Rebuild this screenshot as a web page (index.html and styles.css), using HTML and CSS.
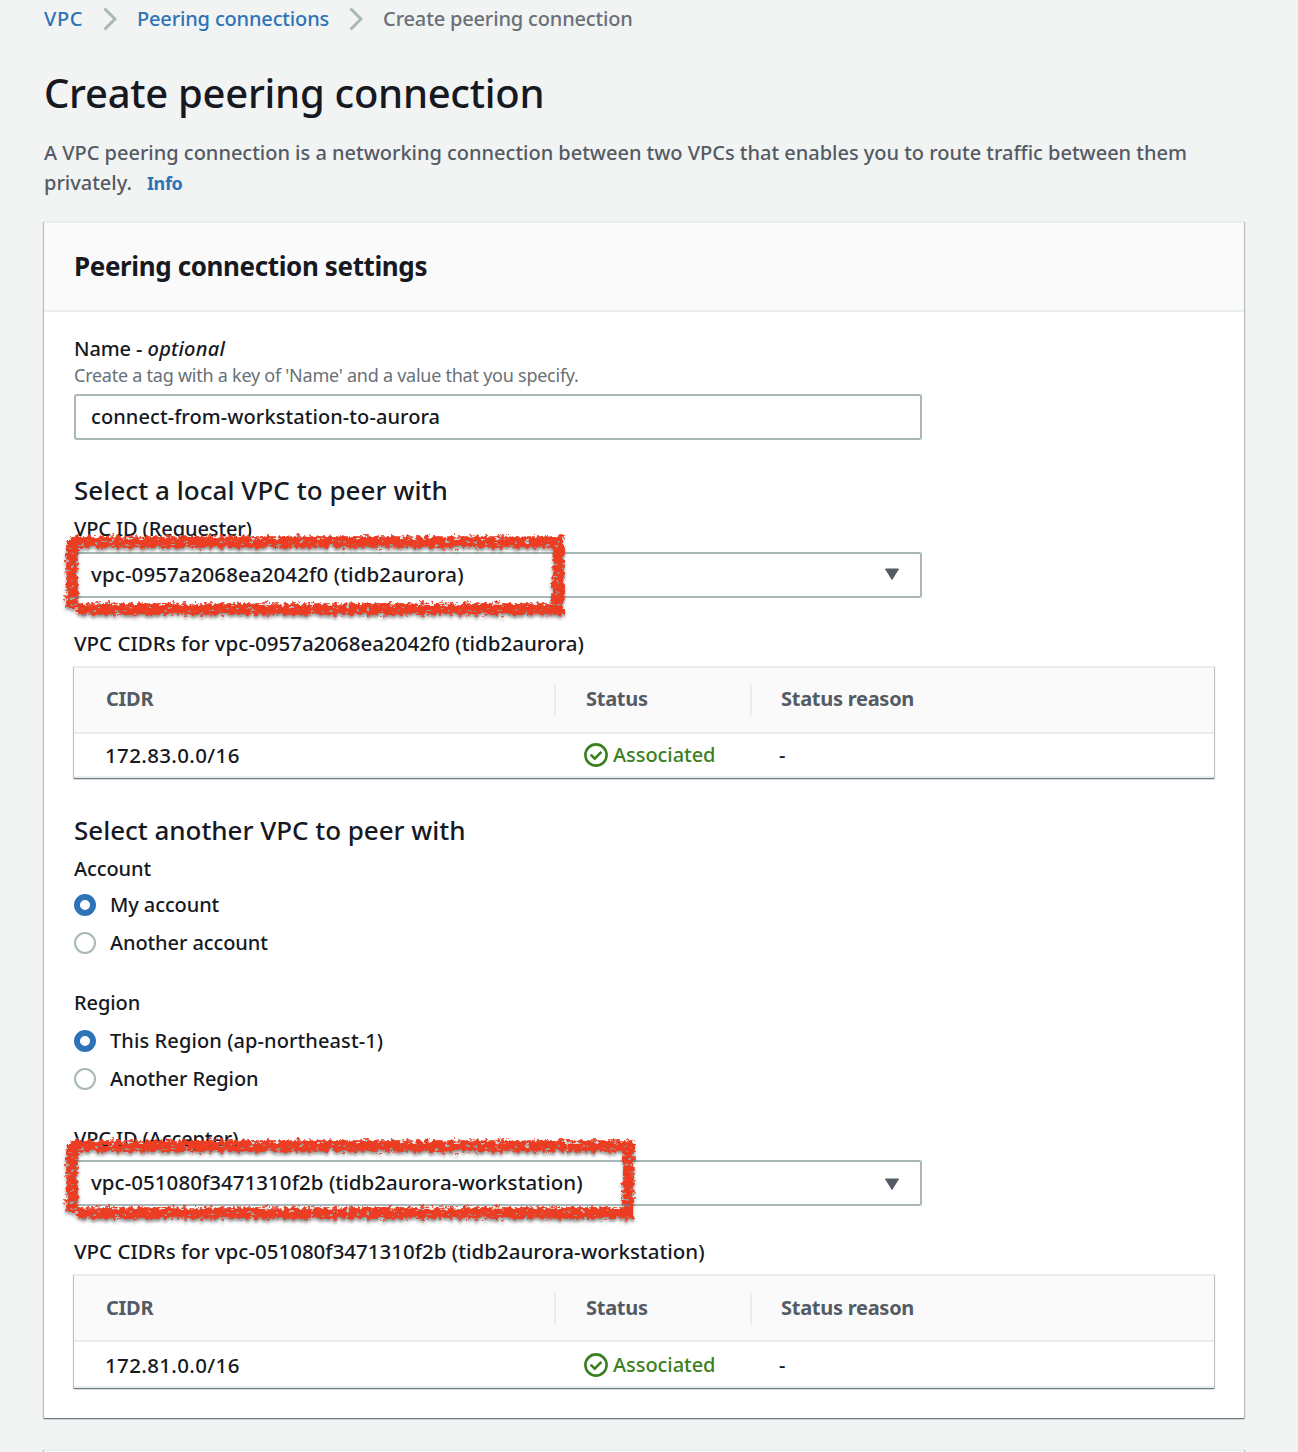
FILE: index.html
```html
<!DOCTYPE html>
<html lang="en">
<head>
<meta charset="utf-8">
<title>Create peering connection</title>
<link rel="stylesheet" href="styles.css">
</head>
<body>
<svg class="defs" width="0" height="0" aria-hidden="true">
  <filter id="brush" filterUnits="userSpaceOnUse" x="0" y="0" width="670" height="110" color-interpolation-filters="sRGB">
    <feTurbulence type="fractalNoise" baseFrequency="0.24" numOctaves="3" seed="4" result="noise"/>
    <feDisplacementMap in="SourceGraphic" in2="noise" scale="9" xChannelSelector="R" yChannelSelector="G" result="rough"/>
    <feTurbulence type="fractalNoise" baseFrequency="0.2 0.32" numOctaves="2" seed="11"/>
    <feColorMatrix values="0 0 0 0 0  0 0 0 0 0  0 0 0 0 0  -14 0 0 0 10" result="specks"/>
    <feComposite in="rough" in2="specks" operator="in" result="ink"/>
    <feDropShadow in="ink" dx="0" dy="2.5" stdDeviation="1.8" flood-color="#000" flood-opacity=".45"/>
  </filter>
</svg>
<nav class="breadcrumbs">
  <a>VPC</a>
  <svg class="chevron" viewBox="0 0 14 24"><path d="M1.5 1.5 12 12 1.5 22.5"/></svg>
  <a>Peering connections</a>
  <svg class="chevron" viewBox="0 0 14 24"><path d="M1.5 1.5 12 12 1.5 22.5"/></svg>
  <span>Create peering connection</span>
</nav>
<h1>Create peering connection</h1>
<p class="description">A VPC peering connection is a networking connection between two VPCs that enables you to route traffic between them<br>privately. <a class="info">Info</a></p>

<main class="card">
  <header class="card-header"><h2>Peering connection settings</h2></header>
  <div class="card-body">
    <div class="label">Name - <em>optional</em></div>
    <div class="hint">Create a tag with a key of 'Name' and a value that you specify.</div>
    <div class="field name-field">connect-from-workstation-to-aurora</div>

    <h3>Select a local VPC to peer with</h3>
    <div class="label requester-label">VPC ID (Requester)</div>
    <div class="field select vpc">vpc-0957a2068ea2042f0 (tidb2aurora)
      <svg class="caret" viewBox="0 0 16 13"><path d="M1.5 1h13L8 11.5z"/></svg>
      <svg class="marker" width="670" height="110"><g filter="url(#brush)"><path d="M20 26H514M22 26V92M508 24V98M27 93H514"/></g></svg>
    </div>
    <div class="caption">VPC CIDRs for vpc-0957a2068ea2042f0 (tidb2aurora)</div>
    <div class="table">
      <div class="row head"><div class="cell">CIDR</div><div class="cell">Status</div><div class="cell">Status reason</div></div>
      <div class="row">
        <div class="cell num">172.83.0.0/16</div>
        <div class="cell ok"><svg viewBox="0 0 24 24"><circle cx="12" cy="12" r="10.6"/><path d="m6.7 11.7 4 4 6.7-6.8"/></svg>Associated</div>
        <div class="cell">-</div>
      </div>
    </div>

    <h3 class="another">Select another VPC to peer with</h3>
    <div class="label">Account</div>
    <div class="radio first"><i class="dot on"></i>My account</div>
    <div class="radio"><i class="dot"></i>Another account</div>
    <div class="label region-label">Region</div>
    <div class="radio"><i class="dot on"></i>This Region (ap-northeast-1)</div>
    <div class="radio"><i class="dot"></i>Another Region</div>

    <div class="label accepter-label">VPC ID (Accepter)</div>
    <div class="field select vpc accepter">vpc-051080f3471310f2b (tidb2aurora-workstation)
      <svg class="caret" viewBox="0 0 16 13"><path d="M1.5 1h13L8 11.5z"/></svg>
      <svg class="marker" width="670" height="110"><g filter="url(#brush)"><path d="M20 26H584M22 26V92M578 24V98M27 93H584"/></g></svg>
    </div>
    <div class="caption">VPC CIDRs for vpc-051080f3471310f2b (tidb2aurora-workstation)</div>
    <div class="table accepter-table">
      <div class="row head"><div class="cell">CIDR</div><div class="cell">Status</div><div class="cell">Status reason</div></div>
      <div class="row">
        <div class="cell num">172.81.0.0/16</div>
        <div class="cell ok"><svg viewBox="0 0 24 24"><circle cx="12" cy="12" r="10.6"/><path d="m6.7 11.7 4 4 6.7-6.8"/></svg>Associated</div>
        <div class="cell">-</div>
      </div>
    </div>
  </div>
</main>
<section class="card next-card"></section>
</body>
</html>
```
FILE: styles.css
```css
* { box-sizing: border-box; }
html { height: 1452px; overflow: hidden; }
body {
  margin: 0;
  padding: 0 53px 0 44px;
  height: 1452px;
  overflow: hidden;
  background: #f2f3f3;
  color: #16191f;
  font: 500 20px/30px "Noto Sans", sans-serif;
}
h1, h2, h3, p { margin: 0; }
.defs { position: absolute; }

.breadcrumbs { display: flex; align-items: center; height: 38px; color: #687078; letter-spacing: -.16px; }
.breadcrumbs a, .info { color: #2e73b8; }
.chevron { width: 14px; height: 24px; margin: 0 20px 0 20px; fill: none; stroke: #aab7b8; stroke-width: 3; }
.breadcrumbs a:first-child { width: 39px; letter-spacing: .6px; }

h1 { margin-top: 30px; font-size: 40px; line-height: 50px; font-weight: 500; letter-spacing: -.28px; }
.description { margin-top: 20px; color: #545b64; letter-spacing: -.015px; white-space: nowrap; }
.info { margin-left: 10px; font-size: 18px; font-weight: 700; letter-spacing: -.4px; }

.card {
  width: 1200px;
  margin-top: 23px;
  background: #fff;
  border-top: 2px solid #eaeded;
  box-shadow: 0 1px 1px 0 #6b7a80, 1px 1px 1px 0 rgba(0,28,36,.2), -1px 1px 1px 0 rgba(0,28,36,.2);
}
.card-header { height: 89px; padding: 26px 30px; background: #fafafa; border-bottom: 2px solid #eaeded; }
h2 { font-size: 26px; line-height: 34px; font-weight: 700; letter-spacing: -.38px; }
.card-body { height: 1106px; padding: 22px 30px 0 30px; }
.next-card { margin-top: 31px; height: 40px; background: #fafafa; }

.label { height: 30px; letter-spacing: -.1px; }
.label em { letter-spacing: .25px; }
.hint { height: 26px; line-height: 22px; font-size: 18px; font-weight: 400; color: #687078; letter-spacing: -.25px; }
.field {
  position: relative;
  width: 848px;
  height: 46px;
  padding: 0 15px;
  border: 2px solid #aab7b8;
  border-radius: 3px;
  line-height: 41px;
  letter-spacing: .08px;
}
.name-field { margin-top: 4px; }
.vpc { font-size: 20.5px; letter-spacing: .1px; }
.caret { position: absolute; right: 20px; top: 14px; width: 16px; height: 13px; fill: #545b64; stroke: #545b64; stroke-linejoin: round; }
.accepter { letter-spacing: .04px; }
.accepter .caret { top: 16px; }
.marker { position: absolute; left: -26px; top: -38px; fill: none; stroke: #ec3c22; stroke-width: 11.5; z-index: 2; }
.accepter .marker { top: -42px; }

h3 { margin-top: 33px; font-size: 26px; line-height: 34px; font-weight: 500; letter-spacing: .05px; }
.requester-label { margin-top: 7px; margin-bottom: 8px; }
.caption { margin-top: 30px; height: 30px; font-size: 20.5px; letter-spacing: 0; }

.table {
  height: 112px;
  margin-top: 8px;
  border-top: 2px solid #eaeded;
  border-bottom: 2px solid #eaeded;
  box-shadow: 0 1px 1px 0 #6b7a80, 1px 1px 1px 0 rgba(0,28,36,.2), -1px 1px 1px 0 rgba(0,28,36,.2);
}
.row { display: grid; grid-template-columns: 482px 196px 1fr; align-items: center; height: 42px; }
.head { height: 66px; background: #fafafa; border-bottom: 2px solid #eaeded; color: #545b64; font-weight: 700; letter-spacing: -.27px; }
.cell { padding-left: 31px; }
.cell + .cell { padding-left: 27px; }
.head .cell { height: 32px; padding-left: 32px; }
.head .cell + .cell { padding-left: 30px; border-left: 2px solid #eaeded; margin-left: -2px; }
.head .cell:last-child { padding-left: 29px; }
.num { font-size: 20.5px; letter-spacing: .35px; }
.ok { display: flex; align-items: center; gap: 5px; color: #3b8020; letter-spacing: -.05px; }
.row .ok { padding-left: 28px; }
.ok svg { width: 24px; height: 24px; fill: none; stroke: #3b8020; stroke-width: 2.6; }
.accepter-table { height: 114px; }
.accepter-table .row { height: 45px; }
.accepter-table .head { height: 66px; padding-top: 2px; }

.another { margin-top: 35px; letter-spacing: -.03px; }
.another + .label { margin-top: 7px; }
.radio { display: flex; align-items: center; gap: 14px; height: 38px; letter-spacing: -.1px; }
.region-label + .radio { letter-spacing: .1px; }
.first { margin-top: 2px; }
.dot { width: 22px; height: 22px; border: 2px solid #aab7b8; border-radius: 50%; background: #fff; }
.dot.on { border: 6.5px solid #2e73b8; }
.region-label { margin-top: 26px; margin-bottom: 4px; }
.accepter-label { margin-top: 26px; margin-bottom: 6px; }
```
